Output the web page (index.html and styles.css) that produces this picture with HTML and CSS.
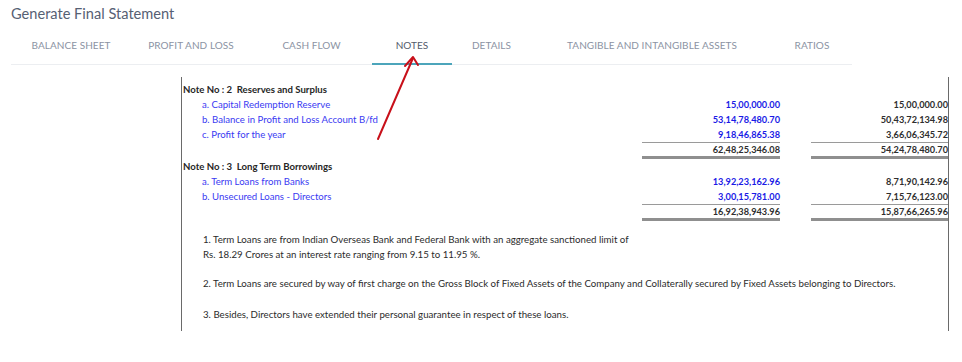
FILE: index.html
```html
<!DOCTYPE html>
<html lang="en">
<head>
<meta charset="utf-8">
<title>Generate Final Statement</title>
<link rel="stylesheet" href="styles.css">
</head>
<body>
<div class="page">
  <h1 class="title">Generate Final Statement</h1>
  <nav class="tabs">
    <a class="tab tab-balance">BALANCE SHEET</a>
    <a class="tab tab-profit">PROFIT AND LOSS</a>
    <a class="tab tab-cash">CASH FLOW</a>
    <a class="tab tab-notes active">NOTES</a>
    <a class="tab tab-details">DETAILS</a>
    <a class="tab tab-assets">TANGIBLE AND INTANGIBLE ASSETS</a>
    <a class="tab tab-ratios">RATIOS</a>
  </nav>

  <div class="sheet">
    <div class="row head"><span class="label">Note No : 2&nbsp;&nbsp;Reserves and Surplus</span></div>
    <div class="row item"><span class="label">a. Capital Redemption Reserve</span><span class="cur">15,00,000.00</span><span class="prev">15,00,000.00</span></div>
    <div class="row item"><span class="label">b. Balance in Profit and Loss Account B/fd</span><span class="cur">53,14,78,480.70</span><span class="prev">50,43,72,134.98</span></div>
    <div class="row item"><span class="label">c. Profit for the year</span><span class="cur">9,18,46,865.38</span><span class="prev">3,66,06,345.72</span></div>
    <div class="row total"><span class="label"></span><span class="cur">62,48,25,346.08</span><span class="prev">54,24,78,480.70</span></div>

    <div class="row head"><span class="label">Note No : 3&nbsp;&nbsp;Long Term Borrowings</span></div>
    <div class="row item"><span class="label">a. Term Loans from Banks</span><span class="cur">13,92,23,162.96</span><span class="prev">8,71,90,142.96</span></div>
    <div class="row item"><span class="label">b. Unsecured Loans - Directors</span><span class="cur">3,00,15,781.00</span><span class="prev">7,15,76,123.00</span></div>
    <div class="row total"><span class="label"></span><span class="cur">16,92,38,943.96</span><span class="prev">15,87,66,265.96</span></div>

    <div class="notes">
      <p class="note-first">1. Term Loans are from Indian Overseas Bank and Federal Bank with an aggregate sanctioned limit of<br>Rs. 18.29 Crores at an interest rate ranging from 9.15 to 11.95 %.</p>
      <p class="note-second">2. Term Loans are secured by way of first charge on the Gross Block of Fixed Assets of the Company and Collaterally secured by Fixed Assets belonging to Directors.</p>
      <p>3. Besides, Directors have extended their personal guarantee in respect of these loans.</p>
    </div>
  </div>

  <svg class="arrow" width="962" height="362" viewBox="0 0 962 362" aria-hidden="true">
    <line x1="378" y1="139" x2="413" y2="58" stroke="#c8101a" stroke-width="2" stroke-linecap="round"/>
    <polyline points="405,66 413,57 418,65" fill="none" stroke="#c8101a" stroke-width="2" stroke-linecap="round" stroke-linejoin="round"/>
  </svg>
</div>
</body>
</html>
```

FILE: styles.css
```css
* { box-sizing: border-box; }

html, body {
  margin: 0;
  padding: 0;
  background: #ffffff;
}

body {
  font-family: Lato, "Open Sans", sans-serif;
}

.page {
  position: relative;
  width: 962px;
  height: 362px;
  overflow: hidden;
}

.title {
  margin: 0;
  padding: 2px 0 0 11px;
  height: 26px;
  font-size: 14.6px;
  line-height: 24px;
  font-weight: 400;
  color: #56607253;
  color: #566073;
}

.tabs {
  display: flex;
  margin-left: 11px;
  width: 841px;
  height: 39px;
  border-bottom: 1px solid #eceef1;
}

.tab {
  display: block;
  height: 38px;
  line-height: 38px;
  text-align: center;
  font-size: 10px;
  color: #8b93a3;
  letter-spacing: 0.05px;
  white-space: nowrap;
}

.tab.active {
  color: #545c6b;
  height: 39px;
  margin-bottom: -1px;
  border-bottom: 2px solid #4ca5bb;
}

.tab-balance { width: 120px; }
.tab-profit { width: 120px; }
.tab-cash { width: 121px; }
.tab-notes { width: 80px; }
.tab-details { width: 79px; }
.tab-assets { width: 242px; }
.tab-ratios { width: 78px; }

.sheet {
  margin: 12px 0 0 181px;
  width: 768px;
  padding-top: 5px;
  border-left: 1px solid #6a6a6a;
  border-right: 1px solid #6a6a6a;
  font-size: 9px;
}

.row {
  display: grid;
  grid-template-columns: 460px 138px 168px;
  height: 15px;
  line-height: 15px;
}

.row .label {
  white-space: nowrap;
  font-size: 9.6px;
}

.head .label {
  padding-left: 1px;
  font-weight: 700;
  color: #262626;
  grid-column: 1 / 4;
}

.item .label {
  padding-left: 20px;
  color: #3a3af2;
}

.cur, .prev {
  text-align: right;
  font-weight: 700;
  white-space: nowrap;
  font-size: 9.2px;
}

.cur {
  color: #1a1ae6;
}

.prev {
  margin-left: 31px;
  color: #2e2e2e;
}

.total {
  height: 17px;
}

.total .cur,
.total .prev {
  color: #2e2e2e;
  line-height: 13px;
  border-top: 1px solid #9a9a9a;
  border-bottom: 3px solid #8f8f8f;
}

.notes {
  padding: 11px 0 9px 21px;
  color: #2b2b2b;
  font-size: 9.7px;
  line-height: 15px;
}

.notes p {
  margin: 0;
  white-space: nowrap;
}

.notes .note-first {
  margin-bottom: 14px;
}

.notes .note-second {
  margin-bottom: 16px;
}

.arrow {
  position: absolute;
  left: 0;
  top: 0;
  pointer-events: none;
}
```
